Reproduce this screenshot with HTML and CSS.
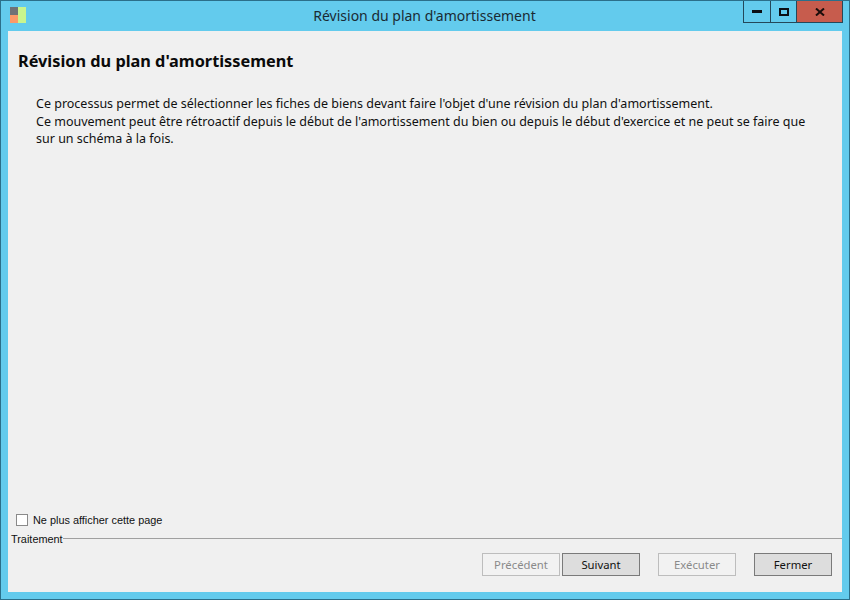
FILE: index.html
```html
<!DOCTYPE html>
<html lang="fr">
<head>
<meta charset="utf-8">
<title>Révision du plan d'amortissement</title>
<link rel="stylesheet" href="styles.css">
</head>
<body>
<div class="window">
  <header class="titlebar">
    <svg class="app-icon" width="16" height="16" viewBox="0 0 16 16">
      <rect x="0" y="0" width="8" height="8" fill="#6f7276"/>
      <rect x="0" y="8" width="8" height="8" fill="#fb9a68"/>
      <rect x="8" y="0" width="8" height="16" fill="#c9f58e"/>
    </svg>
    <div class="title">Révision du plan d'amortissement</div>
    <div class="controls">
      <div class="ctl ctl-min"><svg width="10" height="3" viewBox="0 0 10 3"><rect width="10" height="3" fill="#0b0f14"/></svg></div>
      <div class="ctl ctl-max"><svg width="10" height="8" viewBox="0 0 10 8"><rect x="1" y="1" width="8" height="6" fill="none" stroke="#0b0f14" stroke-width="2"/></svg></div>
      <div class="ctl ctl-close"><svg width="10" height="8" viewBox="0 0 10 8"><path d="M1 0.5 L9 7.5 M9 0.5 L1 7.5" fill="none" stroke="#1a0d0b" stroke-width="2"/></svg></div>
    </div>
  </header>
  <main class="client">
    <h1 class="heading">Révision du plan d'amortissement</h1>
    <div class="desc">
      <p>Ce processus permet de sélectionner les fiches de biens devant faire l'objet d'une révision du plan d'amortissement.</p>
      <p>Ce mouvement peut être rétroactif depuis le début de l'amortissement du bien ou depuis le début d'exercice et ne peut se faire que sur un schéma à la fois.</p>
    </div>
    <label class="check"><span class="box"></span><span>Ne plus afficher cette page</span></label>
    <div class="group"><span class="group-label">Traitement</span><span class="group-line"></span></div>
    <div class="actions">
      <div class="nav">
        <button class="btn" disabled>Précédent</button>
        <button class="btn primary">Suivant</button>
      </div>
      <button class="btn" disabled>Exécuter</button>
      <button class="btn primary">Fermer</button>
    </div>
  </main>
</div>
</body>
</html>
```
FILE: styles.css
```css
html, body {
  margin: 0;
  padding: 0;
  width: 850px;
  height: 600px;
  overflow: hidden;
}
.window {
  box-sizing: border-box;
  width: 850px;
  height: 600px;
  background: #63cbed;
  border: 1px solid #2b6f8a;
  display: flex;
  flex-direction: column;
  padding: 0 7px 7px;
  font-family: "Noto Sans", sans-serif;
  color: #111;
}
.titlebar {
  height: 30px;
  flex: none;
  display: flex;
  align-items: flex-start;
  position: relative;
}
.app-icon {
  margin: 6px 0 0 2px;
}
.title {
  position: absolute;
  left: -1px;
  right: 0;
  top: 5px;
  text-align: center;
  font-size: 14px;
  line-height: 20px;
  color: #1a2a33;
}
.controls {
  position: absolute;
  top: 0;
  right: -1px;
  display: flex;
  height: 21px;
  border: 1px solid #24485a;
  border-top: 0;
}
.ctl {
  height: 21px;
  display: flex;
  align-items: center;
  justify-content: center;
}
.ctl-min { width: 26px; border-right: 1px solid #24485a; }
.ctl-max { width: 25px; border-right: 1px solid #24485a; }
.ctl-close { width: 45px; background: #c75c4d; }
.client {
  flex: 1;
  background: #f0f0f0;
  display: flex;
  flex-direction: column;
  min-height: 0;
}
.heading {
  margin: 19px 0 0 10px;
  font-size: 16.3px;
  line-height: 22px;
  font-weight: 700;
  color: #0a0a0a;
}
.desc {
  margin: 23px 30px 0 28px;
  font-size: 12.5px;
  line-height: 17.5px;
  flex: 1;
}
.desc p {
  margin: 0;
}
.check {
  display: flex;
  align-items: center;
  gap: 5px;
  margin-left: 8px;
  font-family: "Liberation Sans", sans-serif;
  font-size: 10.9px;
  line-height: 14px;
}
.box {
  box-sizing: border-box;
  width: 12px;
  height: 12px;
  background: #fff;
  border: 1px solid #8a8a8a;
}
.group {
  display: flex;
  align-items: center;
  margin: 6px 0 0 3px;
  height: 13px;
  font-family: "Liberation Sans", sans-serif;
  font-size: 10.9px;
  line-height: 13px;
}
.group-line {
  flex: 1;
  height: 1px;
  background: #a0a0a0;
  margin-bottom: 3px;
}
.actions {
  display: flex;
  justify-content: flex-end;
  align-items: flex-start;
  margin: 7px 10px 16px 0;
}
.nav {
  display: flex;
  gap: 2px;
  margin-right: 18px;
}
.actions > .btn + .btn {
  margin-left: 18px;
}
.btn {
  box-sizing: border-box;
  width: 78px;
  height: 23px;
  padding: 0;
  font-family: inherit;
  font-size: 11.3px;
  line-height: 20px;
  border: 1px solid #adadad;
  background: #efefef;
  color: #111;
}
.btn:disabled {
  color: #8a8a8a;
  border-color: #bdbdbd;
  background: #f2f2f2;
}
.btn.primary {
  background: #dddddd;
  border-color: #7a7a7a;
}
```
